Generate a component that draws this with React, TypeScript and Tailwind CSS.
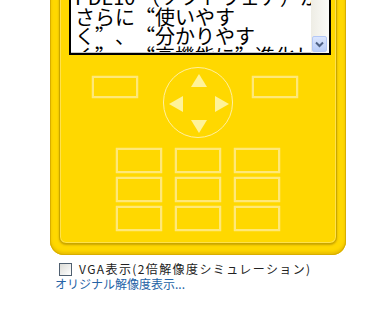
import React from "react";

const jp = { fontFamily: '"Noto Sans CJK JP", "Noto Sans", sans-serif' };

function RectBtn({ className = "" }: { className?: string }) {
  return (
    <div
      className={
        "w-[46px] border-2 border-[#ffe878] shadow-[0_0_1px_#fff3b0] " + className
      }
    />
  );
}

function DPad() {
  return (
    <div className="relative ml-[25px] h-[71px] w-[70px] rounded-full border border-[#fff0a0]">
      <svg
        className="absolute left-0 top-0"
        width="70"
        height="71"
        viewBox="0 0 70 71"
      >
        <polygon points="35,6 43,19 27,19" fill="#fff39a" />
        <polygon points="35,65 43,52 27,52" fill="#fff39a" />
        <polygon points="5,36 19,28 19,44" fill="#fff39a" />
        <polygon points="65,36 51,28 51,44" fill="#fff39a" />
      </svg>
    </div>
  );
}

export default function App() {
  return (
    <div className="h-[309px] w-[381px] overflow-hidden bg-white" style={jp}>
      {/* phone body */}
      <div className="-mt-[40px] ml-[50px] w-[296px] rounded-b-[14px] bg-[#ffd800] px-[9px] pb-[11px] pt-[9px] shadow-[inset_0_0_0_1px_#d8ae00,inset_0_-2px_3px_1px_#e9bf00]">
        <div className="flex flex-col rounded-[7px] border border-[#c9a700] bg-[#ffd800] pb-[12px] shadow-[0_1px_2px_rgba(140,100,0,0.45),inset_0_0_0_1px_#ffe24c]">
          {/* screen */}
          <div className="ml-[9px] flex h-[85px] w-[262px] border-2 border-black bg-white">
            <div className="relative flex-1 overflow-hidden border-b border-[#c8c8c8]">
              <div className="absolute left-[4px] top-[15px] text-[20px] leading-[19.5px] text-black [font-feature-settings:'fwid']">
                <div className="whitespace-nowrap">
                  <span className="[font-feature-settings:normal]">PDE10 </span>
                  （ソフトウェア）が、
                </div>
                <div className="whitespace-nowrap">さらに“使いやす</div>
                <div className="whitespace-nowrap">く”、“分かりやす</div>
                <div className="whitespace-nowrap">く”、“高機能に”進化し</div>
              </div>
            </div>
            <div className="flex w-[18px] flex-col justify-end bg-gradient-to-r from-[#eeede5] to-[#fbfbf8] px-[1px] pb-[1px]">
              <div className="flex h-[16px] w-[15px] items-center justify-center rounded-[2px] border border-[#b4c8f6] bg-gradient-to-b from-[#dbe6fe] to-[#b9cdf8]">
                <svg width="9" height="7" viewBox="0 0 9 7">
                  <polyline
                    points="1,1.5 4.5,5 8,1.5"
                    fill="none"
                    stroke="#4d6185"
                    strokeWidth="2"
                  />
                </svg>
              </div>
            </div>
          </div>

          {/* nav row */}
          <div className="mt-[12px] flex items-start">
            <RectBtn className="ml-[32px] mt-[9px] h-[22px]" />
            <DPad />
            <RectBtn className="ml-[19px] mt-[9px] h-[22px]" />
          </div>

          {/* key grid */}
          <div className="ml-[56px] mt-[10px] grid w-[165px] grid-cols-[46px_46px_46px] gap-x-[13px] gap-y-[4px]">
            {Array.from({ length: 9 }).map((_, i) => (
              <RectBtn key={i} className="h-[25px]" />
            ))}
          </div>
        </div>
      </div>

      {/* options */}
      <div className="ml-[59px] mt-[7px] flex items-center gap-[7px]">
        <div className="h-[13px] w-[13px] border border-[#4f5f70] bg-gradient-to-br from-[#dcdcd7] to-white" />
        <span className="text-[12px] leading-[14px] tracking-[1.4px] text-[#222]">
          VGA表示(2倍解像度シミュレーション)
        </span>
      </div>
      <div className="ml-[55px] mt-[1px] text-[12px] leading-[14px] text-[#2563a6]">
        オリジナル解像度表示...
      </div>
    </div>
  );
}
